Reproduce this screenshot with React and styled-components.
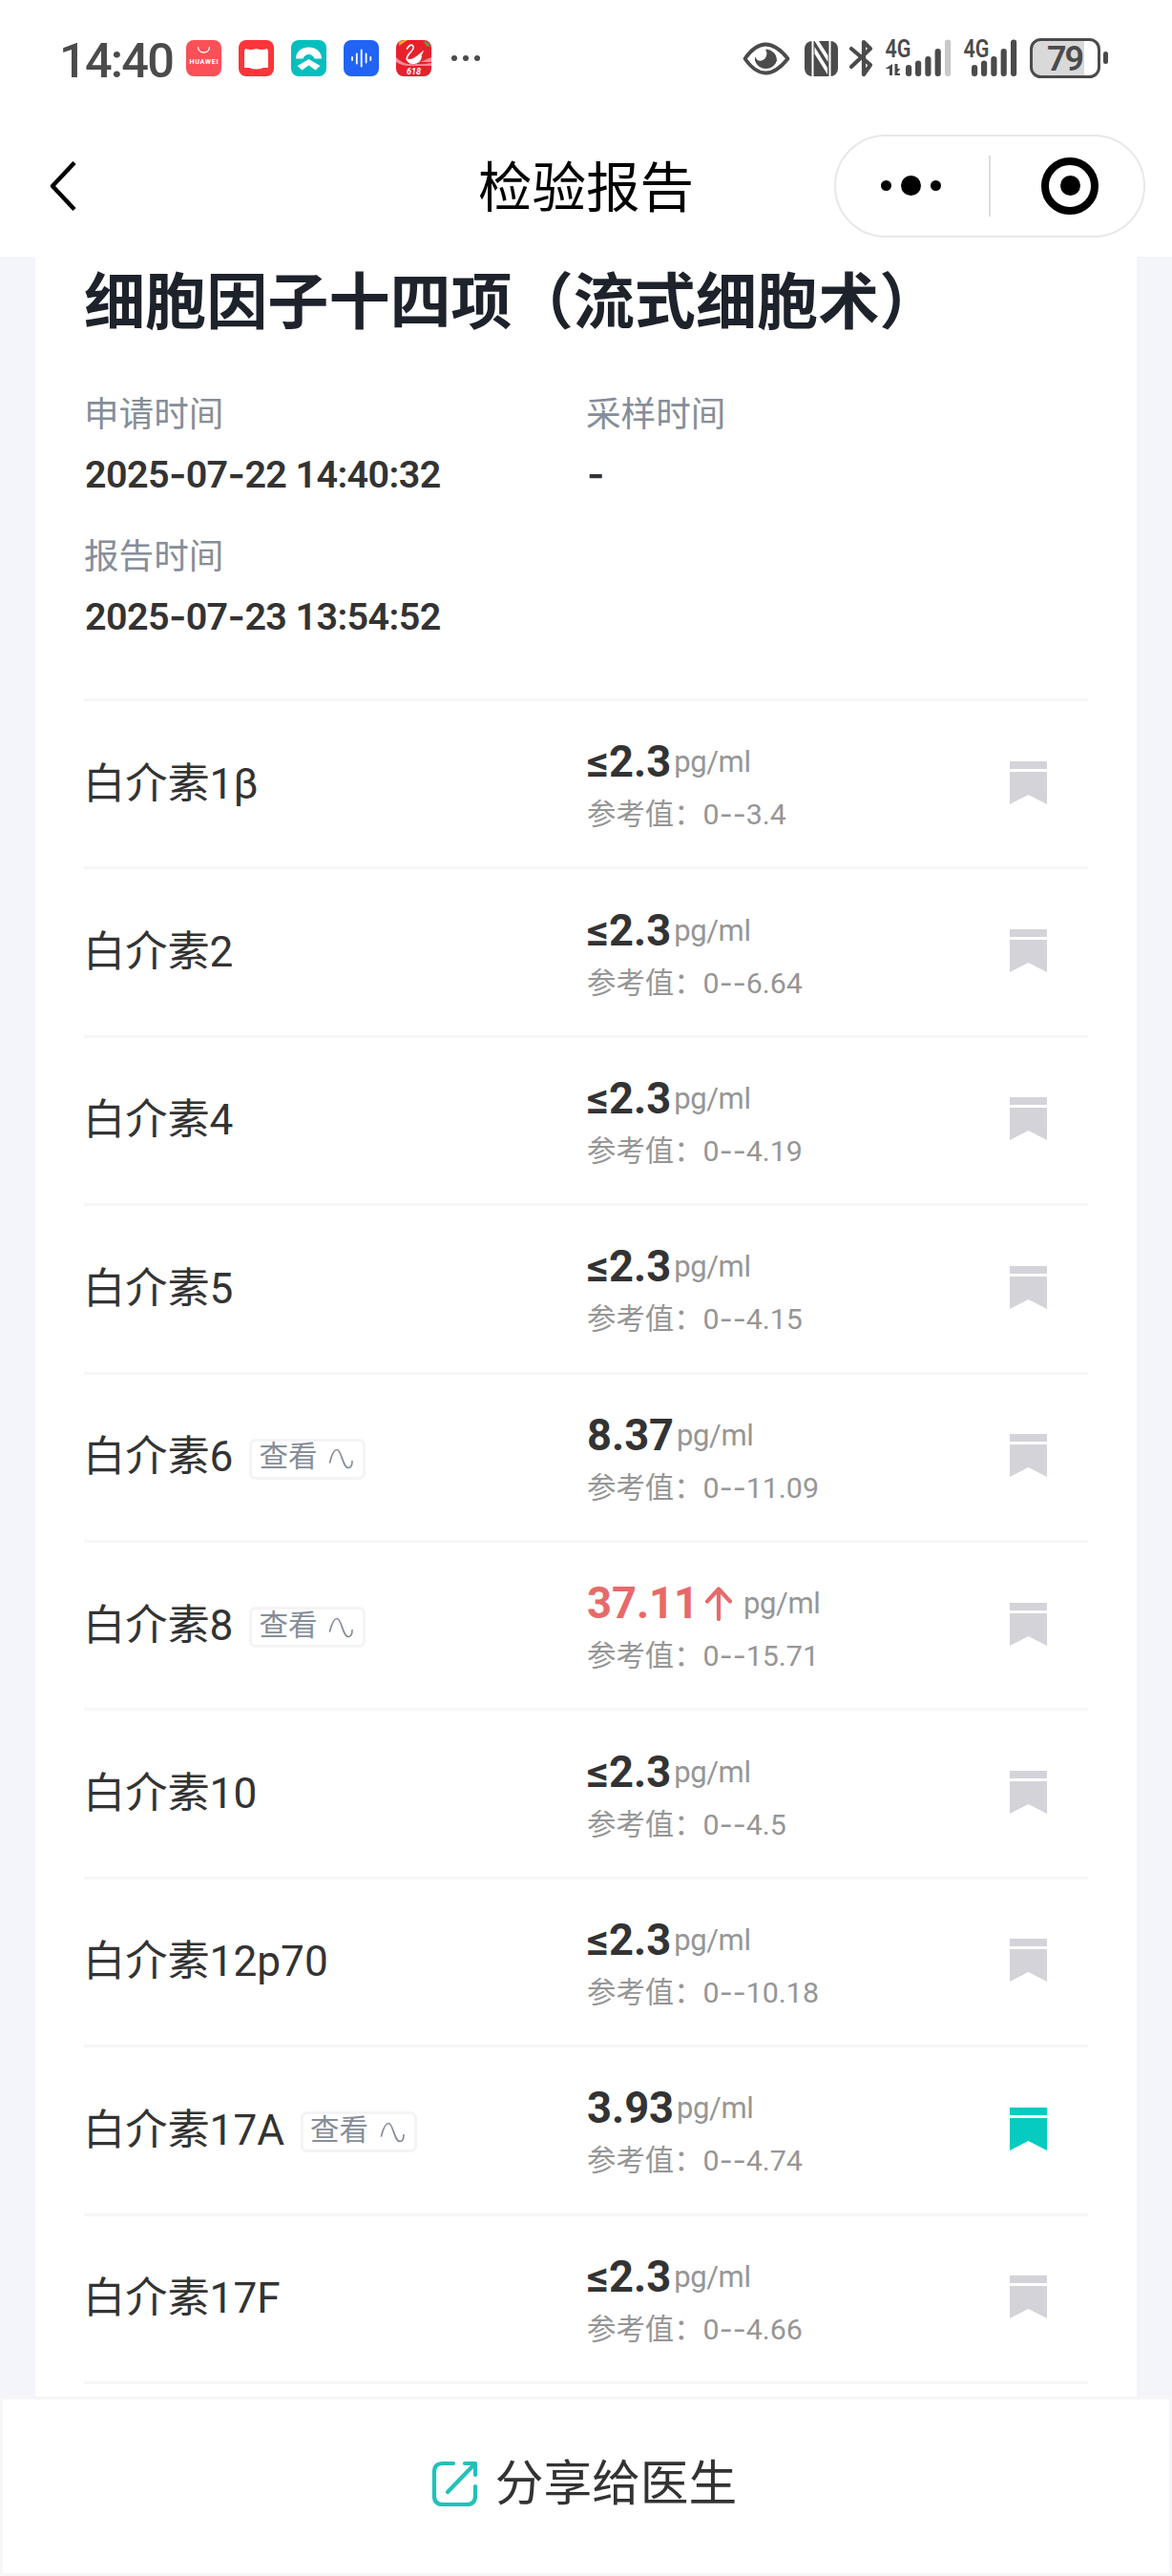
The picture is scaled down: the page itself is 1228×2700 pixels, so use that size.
import React from "react";
import styled, { createGlobalStyle } from "styled-components";

const GlobalStyle = createGlobalStyle`
  * { box-sizing: border-box; }
  body {
    margin: 0;
    background: #fff;
    font-family: Roboto, "Noto Sans CJK SC", sans-serif;
  }
`;

const Screen = styled.div`
  width: 1228px;
  height: 2700px;
  display: flex;
  flex-direction: column;
  overflow: hidden;
  background: #f4f5fa;
`;

const StatusBar = styled.header`
  height: 122px;
  flex: none;
  display: flex;
  justify-content: space-between;
  padding: 34px 67px 0 62px;
  background: #fff;
`;

const StatusSide = styled.div`
  display: flex;
  height: 48px;
  padding-top: 6px;
`;

const Clock = styled.span`
  width: 133px;
  padding-top: 2px;
  font-size: 50.5px;
  font-weight: 500;
  line-height: 44px;
  letter-spacing: -1.8px;
  color: #4b4b4b;
`;

const AppIcons = styled.div`
  display: flex;
  gap: 18px;
  padding-top: 2px;
  svg { display: block; }
`;

const Dots = styled.div`
  display: flex;
  align-items: center;
  gap: 6px;
  margin-left: 21px;
`;

const Dot = styled.i`
  width: ${(p) => p.$size}px;
  height: ${(p) => p.$size}px;
  border-radius: 50%;
  background: ${(p) => p.$color};
`;

const NavBar = styled.nav`
  height: 147px;
  flex: none;
  display: grid;
  grid-template-columns: 326px 1fr 326px;
  align-items: center;
  padding: 0 28px 2px;
  background: #fff;
`;

const BackButton = styled.div`
  padding-left: 22px;
  svg { display: block; }
`;

const NavTitle = styled.h1`
  margin: 0;
  padding-top: 7px;
  text-align: center;
  font-size: 56.5px;
  font-weight: 400;
  line-height: 80px;
  color: #000;
`;

const Capsule = styled.div`
  height: 108px;
  border: 2px solid #e8e8e8;
  border-radius: 54px;
  display: grid;
  grid-template-columns: 1fr 2px 1fr;
  align-items: center;
`;

const MoreDots = styled.div`
  display: flex;
  align-items: center;
  justify-content: center;
  gap: 10px;
  padding-right: 3px;
`;

const Divider = styled.span`
  height: 64px;
  background: #dedede;
`;

const Ring = styled.div`
  width: 60px;
  height: 60px;
  margin-left: 53px;
  border: 8px solid #000;
  border-radius: 50%;
  display: flex;
  align-items: center;
  justify-content: center;
`;

const Card = styled.main`
  flex: 1;
  min-height: 0;
  margin: 0 37px;
  padding: 0 51px;
  background: #fff;
  overflow: hidden;
`;

const ReportTitle = styled.h2`
  margin: 0;
  padding-top: 3px;
  height: 127px;
  font-size: 64.1px;
  font-weight: 700;
  line-height: 92px;
  color: #1d222b;
  white-space: nowrap;
`;

const Meta = styled.dl`
  margin: 0;
  height: 336px;
  display: grid;
  grid-template-columns: 526px 1fr;
  grid-auto-rows: 149px;
`;

const MetaLabel = styled.dt`
  padding-top: 12px;
  font-size: 36.6px;
  line-height: 54px;
  color: #868e99;
`;

const MetaValue = styled.dd`
  margin: 11px 0 0 1px;
  font-size: 39.5px;
  font-weight: 600;
  line-height: 48px;
  letter-spacing: -0.6px;
  color: #333;
  white-space: nowrap;
`;

const Hyphen = styled.span`
  font-family: Inter, sans-serif;
`;

const Row = styled.section`
  height: 176.4px;
  border-top: 3px solid #f6f6f7;
  display: grid;
  grid-template-columns: 526px 1fr 82px;
  align-items: center;
  &:last-child {
    height: 179.4px;
    border-bottom: 3px solid #f6f6f7;
  }
`;

const ItemName = styled.div`
  display: flex;
  align-items: center;
  margin-left: -1px;
  font-size: 44.2px;
  line-height: 64px;
  color: #333;
`;

const TrendButton = styled.span`
  height: 43px;
  margin: 4px 0 0 17px;
  padding: 0 9px 0 7px;
  border: 3px solid #f4f4f6;
  border-radius: 7px;
  display: flex;
  align-items: center;
  gap: 12px;
  font-size: 30.5px;
  line-height: 36px;
  color: #868e99;
  svg { display: block; }
`;

const TrendLabel = styled.span`
  margin-top: -4px;
`;

const Result = styled.div`
  padding: 8px 0 0 1px;
`;

const ValueLine = styled.div`
  display: flex;
  align-items: center;
  height: 56px;
  line-height: 56px;
`;

const Value = styled.span`
  font-size: 45.3px;
  font-weight: 700;
  color: ${(p) => (p.$high ? "#e76a6a" : "#333")};
`;

const UpArrow = styled.svg`
  margin: 0 9px 0 7px;
`;

const Unit = styled.span`
  margin-left: 3px;
  font-size: 31px;
  letter-spacing: -0.4px;
  color: #969696;
`;

const Reference = styled.div`
  font-size: 30.4px;
  line-height: 52px;
  color: #969696;
  white-space: nowrap;
`;

const Bookmark = styled.svg`
  display: block;
  margin-top: -3px;
  fill: ${(p) => (p.$active ? "#06cbc1" : "#d4d3d9")};
`;

const Footer = styled.footer`
  height: 188px;
  flex: none;
  display: flex;
  align-items: center;
  justify-content: center;
  gap: 18px;
  padding: 0 4px 5px 0;
  border: 3px solid #f6f6f8;
  background: #fff;
  font-size: 50.7px;
  line-height: 72px;
  color: #333;
  svg { display: block; }
`;

const StatusGlyphs = styled.svg`
  display: block;
  font-family: Roboto, sans-serif;
`;

const AppTile = ({ children }) => (
  <svg width="37" height="38" viewBox="0 0 37 38">{children}</svg>
);

const bars = (x) =>
  [[0, 28], [10, 23.5], [20.3, 19], [30.6, 11], [41, 1.5]].map(([dx, y]) => ({ x: x + dx, y }));

const SignalBars = ({ x, weak }) =>
  bars(x).map((b, i) => (
    <rect key={i} x={b.x} y={b.y} width="6.2" height={40 - b.y} rx="3"
      fill={weak && i === 4 ? "#c9c9c9" : "#4b4b4b"} />
  ));

const withHyphens = (text) =>
  text.split(/(-+)/).map((part, i) => (part.startsWith("-") ? <Hyphen key={i}>{part}</Hyphen> : part));

const items = [
  { name: "白介素1β", value: "≤2.3", range: "0--3.4" },
  { name: "白介素2", value: "≤2.3", range: "0--6.64" },
  { name: "白介素4", value: "≤2.3", range: "0--4.19" },
  { name: "白介素5", value: "≤2.3", range: "0--4.15" },
  { name: "白介素6", value: "8.37", range: "0--11.09", trend: true },
  { name: "白介素8", value: "37.11", range: "0--15.71", trend: true, high: true },
  { name: "白介素10", value: "≤2.3", range: "0--4.5" },
  { name: "白介素12p70", value: "≤2.3", range: "0--10.18" },
  { name: "白介素17A", value: "3.93", range: "0--4.74", trend: true, marked: true },
  { name: "白介素17F", value: "≤2.3", range: "0--4.66" },
];

const times = [
  ["申请时间", "2025-07-22 14:40:32"],
  ["采样时间", "-"],
  ["报告时间", "2025-07-23 13:54:52"],
];

export default function App() {
  return (
    <Screen>
      <GlobalStyle />
      <StatusBar>
        <StatusSide>
          <Clock>14:40</Clock>
          <AppIcons>
            <AppTile>
              <rect width="37" height="38" rx="8" fill="#fb5058" />
              <path d="M12.5 7c0 8 12 8 12 0" fill="none" stroke="#fff" strokeWidth="1.3" />
              <text x="18.5" y="24.5" textAnchor="middle" fontSize="7.2" fontWeight="700" fill="#fff" textLength="30">HUAWEI</text>
            </AppTile>
            <AppTile>
              <rect width="37" height="38" rx="8" fill="#fb3539" />
              <path d="M7 9q6 2 11.500 0q5.500 2 11.500 0l1 3v17h-5q-7.500 3-15 0h-5v-17z" fill="#fff" />
            </AppTile>
            <AppTile>
              <rect width="37" height="38" rx="8" fill="#07bebe" />
              <path d="M5 19.500c0-16 27-16 27 0h-7.500c-2-6-10-6-12 0zM6.500 27l12-7 12 7-5 4.500-7-5-7 5z" fill="#fff" />
            </AppTile>
            <AppTile>
              <rect width="37" height="38" rx="8" fill="#2163f5" />
              <path d="M9 18v3M13.800 14.500v10M18.700 10.500v17M23.600 14.500v9M28.300 18v3" stroke="#fff" strokeWidth="1.800" strokeLinecap="round" />
            </AppTile>
            <AppTile>
              <rect width="37" height="38" rx="8" fill="#e8202c" />
              <path d="M3 2.500q4-3 9-2.500l-9 6z" fill="#f4b52e" />
              <path d="M28 1q6 0 8 6l-4-1z" fill="#6b9a4a" />
              <path d="M0 23q6 4 14 4h23v-3q-10 2-15 1Q8 27 0 18zM37 18l-12 5h12z" fill="#f78a97" />
              <path d="M10 18.500q3 3 9 0 6-4 10-8-1 4-2.500 5.500 1 1 0 3-1 5-7 6-8 1-9.500-6.500z" fill="#fff" />
              <path d="M11.500 9q4-6 6.500-2.500c2 4-7 8-6.500 12.500" fill="none" stroke="#fff" strokeWidth="1.700" strokeLinecap="round" />
              <text x="18.500" y="36" textAnchor="middle" fontSize="9" fontWeight="700" fontStyle="italic" fill="#fff">618</text>
            </AppTile>
          </AppIcons>
          <Dots>
            <Dot $size={6} $color="#4b4b4b" />
            <Dot $size={6} $color="#4b4b4b" />
            <Dot $size={6} $color="#4b4b4b" />
          </Dots>
        </StatusSide>
        <StatusGlyphs width="384" height="54" viewBox="0 -6 384 54" fill="#4b4b4b">
          <path d="M4 21.500Q25 -8.500 49 21.500Q25 51.500 4 21.500z" transform="translate(-.5 0)" fill="none" stroke="#4b4b4b" strokeWidth="3.800" strokeLinejoin="round" />
          <path d="M25 12c4-1 12 3 12 11.500a12 12 0 0 1-23 0c0-1.500 0-3 .6-4 1 4 4 5 6.400 4 5-1.500 7-7.500 4-11.500z" />
          <rect x="66" y="3" width="35" height="37" rx="8" />
          <path d="M74.500 2.500v37.500M92.500 2.500v37.500" stroke="#fff" strokeWidth="2" />
          <path d="M76.500 16.500L90 38v-7L76.500 9zM81 3L90.500 18v7L76.500 3z" fill="#fff" />
          <path d="M115 11l20 17-7 10V4l7 7-20 19" fill="none" stroke="#4b4b4b" strokeWidth="4.200" strokeLinecap="round" strokeLinejoin="round" />
          <text x="150.500" y="20" fontSize="25" fontWeight="600" textLength="27" lengthAdjust="spacingAndGlyphs">4G</text>
          <path d="M158 27v12h-3v-7h-4.500zM160.500 27v12h5.500l0-2-2.500 0v-10zM160.500 39l6-7h-4z" />
          <SignalBars x={172} weak />
          <text x="232.500" y="20" fontSize="25" fontWeight="600" textLength="27" lengthAdjust="spacingAndGlyphs">4G</text>
          <SignalBars x={241} />
          <rect x="303.500" y="1.500" width="71" height="39" rx="10" fill="#fff" />
          <path d="M314 1.500h45v39h-45a10 10 0 0 1-10-10v-19a10 10 0 0 1 10-10z" fill="#d9d9d9" />
          <rect x="303.500" y="1.500" width="71" height="39" rx="10" fill="none" stroke="#4b4b4b" strokeWidth="3" />
          <rect x="379" y="14" width="5" height="13" rx="2.500" />
          <text x="320" y="34" fontSize="36" fontWeight="600" textLength="39">79</text>
        </StatusGlyphs>
      </StatusBar>

      <NavBar>
        <BackButton>
          <svg width="32" height="54" viewBox="0 0 32 54">
            <path d="M28 2.500L5 27l23 24.500" fill="none" stroke="#000" strokeWidth="4.500" strokeLinejoin="round" />
          </svg>
        </BackButton>
        <NavTitle>检验报告</NavTitle>
        <Capsule>
          <MoreDots>
            <Dot $size={11} $color="#000" />
            <Dot $size={21} $color="#000" />
            <Dot $size={11} $color="#000" />
          </MoreDots>
          <Divider />
          <Ring>
            <Dot $size={21} $color="#000" />
          </Ring>
        </Capsule>
      </NavBar>

      <Card>
        <ReportTitle>细胞因子十四项（流式细胞术）</ReportTitle>
        <Meta>
          {times.map(([label, value]) => (
            <div key={label}>
              <MetaLabel>{label}</MetaLabel>
              <MetaValue>{withHyphens(value)}</MetaValue>
            </div>
          ))}
        </Meta>
        {items.map((item) => (
          <Row key={item.name}>
            <ItemName>
              {item.name}
              {item.trend && (
                <TrendButton>
                  <TrendLabel>查看</TrendLabel>
                  <svg width="27" height="22" viewBox="0 0 27 22">
                    <path d="M1.500 15C4 5 6.500 1.500 9 1.500c5 0 6 19 12 19 3 0 4-3 4-7" fill="none" stroke="#868e99" strokeWidth="1.700" strokeLinecap="round" />
                  </svg>
                </TrendButton>
              )}
            </ItemName>
            <Result>
              <ValueLine>
                <Value $high={item.high}>{item.value}</Value>
                {item.high && (
                  <UpArrow width="28" height="36" viewBox="0 0 28 36">
                    <path d="M14 34V3M2 15.500L14 2.500l12 13" fill="none" stroke="#e76a6a" strokeWidth="4.200" strokeLinecap="round" strokeLinejoin="round" />
                  </UpArrow>
                )}
                <Unit>pg/ml</Unit>
              </ValueLine>
              <Reference>参考值：{withHyphens(item.range)}</Reference>
            </Result>
            <Bookmark $active={item.marked} width="39" height="45" viewBox="0 0 39 45">
              <path d="M0 0h39v8H0zM0 11h39v34L19.500 35 0 45z" />
            </Bookmark>
          </Row>
        ))}
      </Card>

      <Footer>
        <svg width="49" height="49" viewBox="0 0 49 49" fill="none" stroke="#22c1b8" strokeWidth="4.200" strokeLinecap="round" strokeLinejoin="round">
          <path d="M23 3H12Q3 3 3 12v25q0 9 9 9h25q9 0 9-9V27M35 3h11v12M45 4L17 33" />
        </svg>
        分享给医生
      </Footer>
    </Screen>
  );
}
